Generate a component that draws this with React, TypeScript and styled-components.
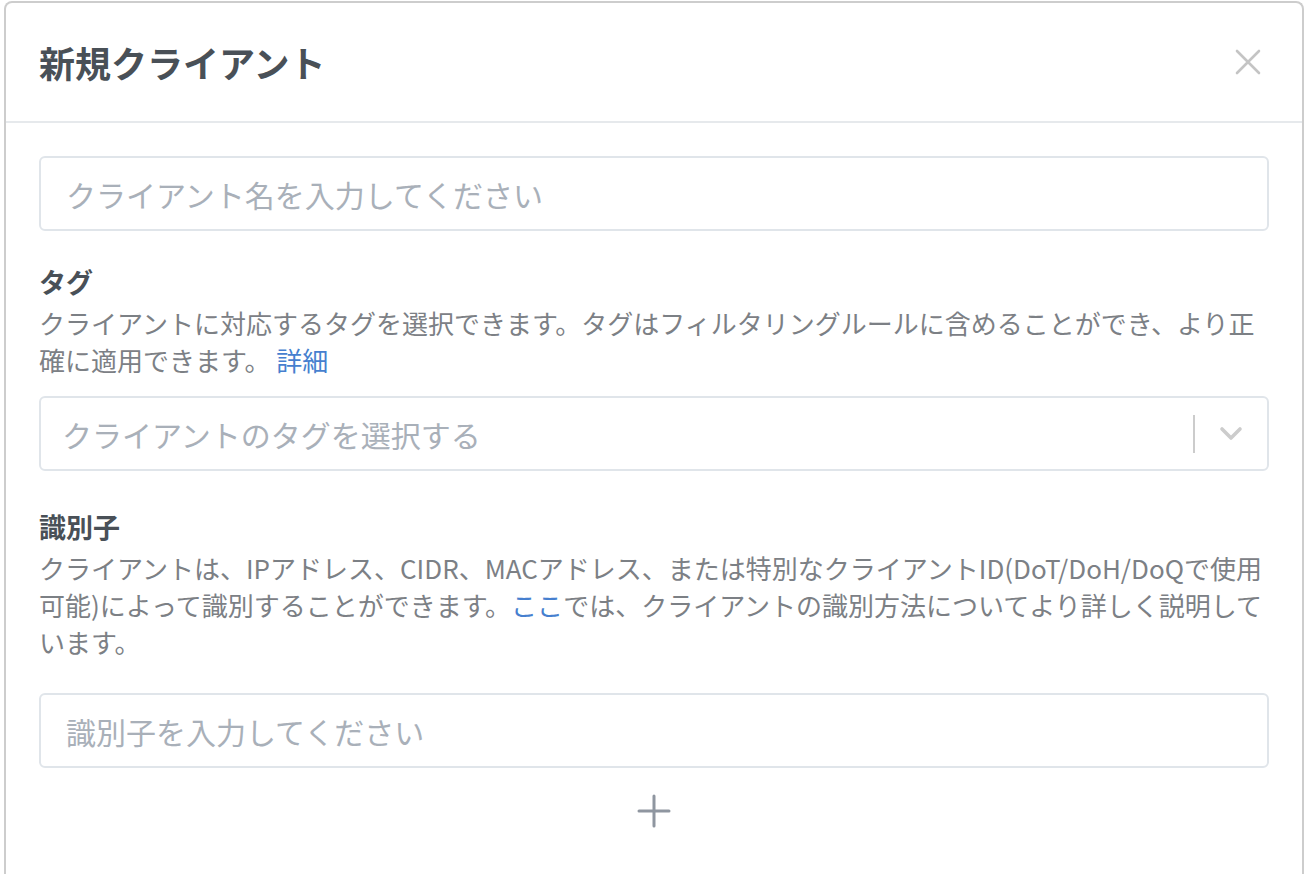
import styled, { createGlobalStyle } from "styled-components";

const GlobalStyle = createGlobalStyle`
  html, body {
    margin: 0;
    padding: 0;
    background: #ffffff;
  }
  body {
    font-family: "Noto Sans CJK JP", "Noto Sans", sans-serif;
    overflow: hidden;
  }
`;

const Page = styled.div`
  height: 874px;
  padding: 1px 2px 0 4px;
  box-sizing: border-box;
  overflow: hidden;
`;

const Modal = styled.div`
  background: #fff;
  border: 2px solid #cdcdcd;
  border-bottom: none;
  border-radius: 8px 8px 0 0;
  height: 900px;
  box-sizing: border-box;
`;

const Header = styled.div`
  display: flex;
  align-items: center;
  justify-content: space-between;
  height: 118px;
  padding: 0 40px 0 33px;
  border-bottom: 2px solid #e6e9ec;
`;

const Title = styled.h2`
  margin: 0;
  font-size: 36px;
  font-weight: 700;
  color: #495057;
  line-height: 1;
`;

const CloseButton = styled.button`
  border: none;
  background: none;
  padding: 0;
  width: 28px;
  height: 28px;
  display: flex;
  align-items: center;
  justify-content: center;
  cursor: pointer;
`;

const Body = styled.div`
  padding: 33px 33px 0 33px;
  display: flex;
  flex-direction: column;
`;

const TextInput = styled.input`
  height: 75px;
  box-sizing: border-box;
  border: 2px solid #e0e5ea;
  border-radius: 6px;
  padding: 0 25px;
  font-family: inherit;
  font-size: 30px;
  color: #495057;
  outline: none;
  &::placeholder {
    color: #a9b0b9;
  }
`;

const Section = styled.div<{ $top: number }>`
  margin-top: ${(p) => p.$top}px;
  display: flex;
  flex-direction: column;
`;

const Label = styled.div`
  font-size: 27px;
  font-weight: 700;
  color: #495057;
  line-height: 37px;
`;

const Description = styled.p<{ $bottom: number }>`
  margin: 4px 0 ${(p) => p.$bottom}px;
  font-size: 26px;
  line-height: 37px;
  color: #7c8085;
`;

const Link = styled.a`
  color: #467fcf;
  text-decoration: none;
`;

const Select = styled.div`
  height: 75px;
  box-sizing: border-box;
  border: 2px solid #e0e5ea;
  border-radius: 6px;
  display: flex;
  align-items: center;
  padding-left: 21px;
`;

const SelectPlaceholder = styled.span`
  flex: 1;
  font-size: 30px;
  color: #a9b0b9;
`;

const Separator = styled.span`
  width: 2px;
  height: 38px;
  background: #cccccc;
`;

const Indicator = styled.span`
  width: 72px;
  display: flex;
  align-items: center;
  justify-content: center;
`;

const AddButton = styled.button`
  align-self: center;
  margin-top: 26px;
  border: none;
  background: none;
  padding: 0;
  width: 34px;
  height: 34px;
  display: flex;
  align-items: center;
  justify-content: center;
  cursor: pointer;
`;

const App = () => {
  return (
    <>
      <GlobalStyle />
      <Page>
        <Modal>
          <Header>
            <Title>新規クライアント</Title>
            <CloseButton aria-label="close">
              <svg width="26" height="26" viewBox="0 0 26 26">
                <path d="M2 2 L24 24 M24 2 L2 24" stroke="#c4c4c4" strokeWidth="2.6" strokeLinecap="round" />
              </svg>
            </CloseButton>
          </Header>
          <Body>
            <TextInput placeholder="クライアント名を入力してください" />

            <Section $top={32}>
              <Label>タグ</Label>
              <Description $bottom={18}>
                クライアントに対応するタグを選択できます。タグはフィルタリングルールに含めることができ、より正
                <br />
                確に適用できます。 <Link href="#">詳細</Link>
              </Description>
              <Select>
                <SelectPlaceholder>クライアントのタグを選択する</SelectPlaceholder>
                <Separator />
                <Indicator>
                  <svg width="24" height="16" viewBox="0 0 24 16">
                    <path d="M3 3 L12 12 L21 3" fill="none" stroke="#cccccc" strokeWidth="3.6" strokeLinecap="round" strokeLinejoin="round" />
                  </svg>
                </Indicator>
              </Select>
            </Section>

            <Section $top={37}>
              <Label>識別子</Label>
              <Description $bottom={33}>
                クライアントは、IPアドレス、CIDR、MACアドレス、または特別なクライアントID(DoT/DoH/DoQで使用
                <br />
                可能)によって識別することができます。<Link href="#">ここ</Link>では、クライアントの識別方法についてより詳しく説明して
                <br />
                います。
              </Description>
              <TextInput placeholder="識別子を入力してください" />
              <AddButton aria-label="add">
                <svg width="34" height="34" viewBox="0 0 34 34">
                  <path d="M17 2 V32 M2 17 H32" stroke="#8f96a0" strokeWidth="3" strokeLinecap="round" />
                </svg>
              </AddButton>
            </Section>
          </Body>
        </Modal>
      </Page>
    </>
  );
};

export default App;
